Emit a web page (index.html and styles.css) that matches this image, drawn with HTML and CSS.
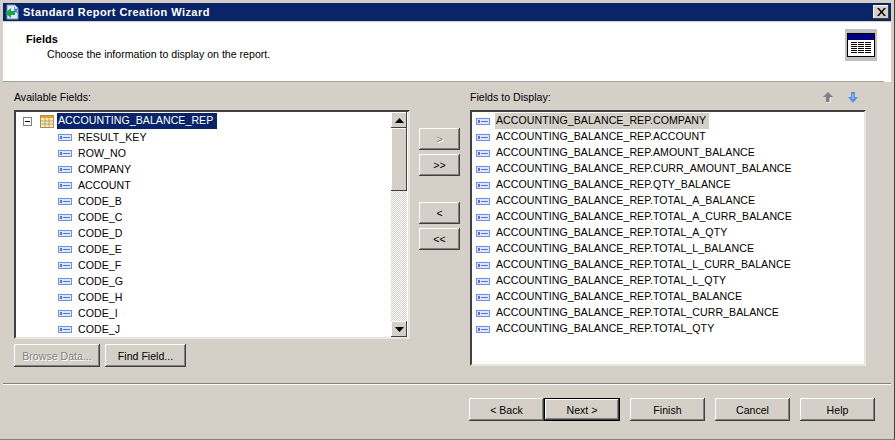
FILE: index.html
```html
<!DOCTYPE html>
<html lang="en">
<head>
<meta charset="utf-8">
<title>Standard Report Creation Wizard</title>
<link rel="stylesheet" href="styles.css">
</head>
<body>
<svg class="defs" width="0" height="0" aria-hidden="true">
  <symbol id="field" viewBox="0 0 14 7">
    <rect x="0.5" y="0.5" width="13" height="6" fill="#dfe8fa" stroke="#6f8fe0"/>
    <rect x="2" y="2" width="2" height="3" fill="#4f74d8"/>
    <rect x="5" y="3" width="7" height="1" fill="#4f74d8"/>
  </symbol>
</svg>
<main class="window">
  <header class="titlebar">
    <svg class="app-icon" width="16" height="16" viewBox="0 0 16 16">
      <path d="M3 1h8l3 3v11H3z" fill="#dfe8f4" stroke="#7f93b5"/>
      <path d="M1 9l6-5v3h4v4H7v3z" fill="#1fa34a"/>
      <path d="M10 2l1.500 3 3-1-2 3 2 2-4-1z" fill="#3f7fd0"/>
    </svg>
    <span class="title">Standard Report Creation Wizard</span>
    <button class="close" aria-label="Close">
      <svg width="9" height="8" viewBox="0 0 9 8"><path d="M0 0h2l2.500 3L7 0h2L5.500 4 9 8H7L4.500 5 2 8H0l3.500-4z" fill="#000"/></svg>
    </button>
  </header>
  <section class="banner">
    <div class="banner-text">
      <h1>Fields</h1>
      <p>Choose the information to display on the report.</p>
    </div>
    <div class="banner-icon">
      <svg width="28" height="24" viewBox="0 0 28 24">
        <rect x="0.500" y="0.500" width="27" height="23" fill="#fff" stroke="#000"/>
        <rect x="1" y="1" width="26" height="6" fill="#000080"/>
        <path d="M4 9h6v1H4zM4 11h6v1H4zM4 13h6v1H4zM4 15h6v1H4zM4 17h6v1H4zM4 19h6v1H4zM11 9h6v1h-6zM11 11h6v1h-6zM11 13h6v1h-6zM11 15h6v1h-6zM11 17h6v1h-6zM11 19h6v1h-6zM18 9h6v1h-6zM18 11h6v1h-6zM18 13h6v1h-6zM18 15h6v1h-6zM18 17h6v1h-6zM18 19h6v1h-6z" fill="#000"/>
      </svg>
    </div>
  </section>
  <section class="content">
    <div class="col-left">
      <label class="col-label">Available Fields:</label>
      <div class="listbox tree">
        <div class="tree-scroll">
          <div class="root-row">
            <span class="expander"></span>
            <svg class="table-icon" width="14" height="13" viewBox="0 0 14 13">
              <rect x="0.500" y="0.500" width="13" height="12" fill="#fbeec4" stroke="#a9915c"/>
              <rect x="1" y="1" width="12" height="2" fill="#f0a020"/>
              <path d="M5 3v9M9 3v9M1 6h12M1 9h12" stroke="#c0a05c" fill="none"/>
            </svg>
            <span class="selected">ACCOUNTING_BALANCE_REP</span>
          </div>
          <div class="child"><svg class="fi"><use href="#field"/></svg>RESULT_KEY</div>
          <div class="child"><svg class="fi"><use href="#field"/></svg>ROW_NO</div>
          <div class="child"><svg class="fi"><use href="#field"/></svg>COMPANY</div>
          <div class="child"><svg class="fi"><use href="#field"/></svg>ACCOUNT</div>
          <div class="child"><svg class="fi"><use href="#field"/></svg>CODE_B</div>
          <div class="child"><svg class="fi"><use href="#field"/></svg>CODE_C</div>
          <div class="child"><svg class="fi"><use href="#field"/></svg>CODE_D</div>
          <div class="child"><svg class="fi"><use href="#field"/></svg>CODE_E</div>
          <div class="child"><svg class="fi"><use href="#field"/></svg>CODE_F</div>
          <div class="child"><svg class="fi"><use href="#field"/></svg>CODE_G</div>
          <div class="child"><svg class="fi"><use href="#field"/></svg>CODE_H</div>
          <div class="child"><svg class="fi"><use href="#field"/></svg>CODE_I</div>
          <div class="child"><svg class="fi"><use href="#field"/></svg>CODE_J</div>
        </div>
        <div class="scrollbar">
          <div class="sb-btn"><svg width="9" height="5" viewBox="0 0 9 5"><path d="M4.500 0L9 5H0z" fill="#000"/></svg></div>
          <div class="sb-thumb"></div>
          <div class="sb-track"></div>
          <div class="sb-btn"><svg width="9" height="5" viewBox="0 0 9 5"><path d="M0 0h9L4.500 5z" fill="#000"/></svg></div>
        </div>
      </div>
      <div class="left-actions">
        <button class="btn browse" disabled>Browse Data...</button>
        <button class="btn find">Find Field...</button>
      </div>
    </div>
    <div class="movers">
      <div class="mover-group">
        <button class="btn mover" disabled>&gt;</button>
        <button class="btn mover">&gt;&gt;</button>
      </div>
      <div class="mover-group">
        <button class="btn mover">&lt;</button>
        <button class="btn mover">&lt;&lt;</button>
      </div>
    </div>
    <div class="col-right">
      <div class="right-head">
        <label class="col-label">Fields to Display:</label>
        <div class="order">
          <svg width="12" height="11" viewBox="0 0 12 11"><path d="M6 0l5 5H8v5H4V5H1z" fill="#808080"/><path d="M8 6v5H4" stroke="#fff" fill="none"/></svg>
          <svg width="12" height="11" viewBox="0 0 12 11"><path d="M4 0h4v5h3l-5 6-5-6h3z" fill="#5b8fe0"/><path d="M6 2v5" stroke="#b9d2f5"/></svg>
        </div>
      </div>
      <div class="listbox display">
        <div class="row"><svg class="fi"><use href="#field"/></svg><span class="focused">ACCOUNTING_BALANCE_REP.COMPANY</span></div>
        <div class="row"><svg class="fi"><use href="#field"/></svg><span>ACCOUNTING_BALANCE_REP.ACCOUNT</span></div>
        <div class="row"><svg class="fi"><use href="#field"/></svg><span>ACCOUNTING_BALANCE_REP.AMOUNT_BALANCE</span></div>
        <div class="row"><svg class="fi"><use href="#field"/></svg><span>ACCOUNTING_BALANCE_REP.CURR_AMOUNT_BALANCE</span></div>
        <div class="row"><svg class="fi"><use href="#field"/></svg><span>ACCOUNTING_BALANCE_REP.QTY_BALANCE</span></div>
        <div class="row"><svg class="fi"><use href="#field"/></svg><span>ACCOUNTING_BALANCE_REP.TOTAL_A_BALANCE</span></div>
        <div class="row"><svg class="fi"><use href="#field"/></svg><span>ACCOUNTING_BALANCE_REP.TOTAL_A_CURR_BALANCE</span></div>
        <div class="row"><svg class="fi"><use href="#field"/></svg><span>ACCOUNTING_BALANCE_REP.TOTAL_A_QTY</span></div>
        <div class="row"><svg class="fi"><use href="#field"/></svg><span>ACCOUNTING_BALANCE_REP.TOTAL_L_BALANCE</span></div>
        <div class="row"><svg class="fi"><use href="#field"/></svg><span>ACCOUNTING_BALANCE_REP.TOTAL_L_CURR_BALANCE</span></div>
        <div class="row"><svg class="fi"><use href="#field"/></svg><span>ACCOUNTING_BALANCE_REP.TOTAL_L_QTY</span></div>
        <div class="row"><svg class="fi"><use href="#field"/></svg><span>ACCOUNTING_BALANCE_REP.TOTAL_BALANCE</span></div>
        <div class="row"><svg class="fi"><use href="#field"/></svg><span>ACCOUNTING_BALANCE_REP.TOTAL_CURR_BALANCE</span></div>
        <div class="row"><svg class="fi"><use href="#field"/></svg><span>ACCOUNTING_BALANCE_REP.TOTAL_QTY</span></div>
      </div>
    </div>
  </section>
  <footer class="footer">
    <div class="nav-pair">
      <button class="btn nav">&lt; Back</button>
      <button class="btn nav default">Next &gt;</button>
    </div>
    <button class="btn nav">Finish</button>
    <button class="btn nav">Cancel</button>
    <button class="btn nav">Help</button>
  </footer>
</main>
</body>
</html>
```
FILE: styles.css
```css
* { box-sizing: border-box; }
html, body { margin: 0; padding: 0; }
body {
  width: 895px;
  height: 440px;
  overflow: hidden;
  background: #d4d0c8;
  font-family: "Liberation Sans", Arial, sans-serif;
  font-size: 10.6px;
  color: #000;
}
.defs { position: absolute; }
.window {
  width: 895px;
  height: 440px;
  padding: 3px;
  border-right: 1px solid #404040;
  border-bottom: 1px solid #808080;
  display: flex;
  flex-direction: column;
}
.titlebar {
  height: 18px;
  flex: none;
  background: #0a246a;
  display: flex;
  align-items: center;
  padding: 0 2px 0 1px;
}
.app-icon { flex: none; }
.title {
  margin-left: 3px;
  color: #fff;
  font-weight: 700;
  font-size: 11px;
  letter-spacing: 0.45px;
  flex: 1;
}
.close {
  width: 16px;
  height: 14px;
  padding: 0;
  border: 0;
  background: #d4d0c8;
  box-shadow: inset -1px -1px 0 #404040, inset 1px 1px 0 #fff;
  display: flex;
  align-items: center;
  justify-content: center;
}
.banner {
  height: 60px;
  flex: none;
  margin-top: 1px;
  background: #fff;
  display: flex;
  justify-content: space-between;
  position: relative;
}
.banner::after {
  content: "";
  position: absolute;
  left: 0;
  right: 7px;
  bottom: 0;
  height: 1px;
  background: #a0a0a0;
}
.banner-text { padding: 10px 0 0 23px; }
.banner-text h1 { margin: 0; font-size: 11px; font-weight: 700; line-height: 14px; }
.banner-text p { margin: 1px 0 0 21px; line-height: 15px; }
.banner-icon {
  width: 32px;
  height: 32px;
  margin: 7px 14px 0 0;
  background: #c0c0c0;
  display: flex;
  align-items: center;
  justify-content: center;
}
.content {
  flex: none;
  height: 303px;
  padding: 9px 0 0 11px;
  border-bottom: 1px solid #fff;
  box-shadow: inset 0 -1px 0 #808080;
  display: flex;
}
.col-left { width: 396px; flex: none; }
.col-label { display: block; height: 19px; line-height: 12px; }
.listbox {
  background: #fff;
  border-top: 2px solid #404040;
  border-left: 2px solid #404040;
  border-right: 2px solid #e8e6e0;
  border-bottom: 2px solid #e8e6e0;
  letter-spacing: 0.05px;
}
.tree { height: 229px; display: flex; }
.tree-scroll { flex: 1; overflow: hidden; padding-top: 1px; }
.root-row {
  height: 16px;
  display: flex;
  align-items: center;
  padding-left: 7px;
}
.expander {
  width: 9px;
  height: 9px;
  border: 1px solid #808080;
  position: relative;
  flex: none;
}
.expander::after {
  content: "";
  position: absolute;
  left: 1px;
  top: 3px;
  width: 5px;
  height: 1px;
  background: #000;
}
.table-icon { margin-left: 8px; flex: none; }
.selected {
  margin-left: 3px;
  padding: 0 4px 0 1px;
  height: 16px;
  line-height: 15px;
  background: #0a246a;
  color: #fff;
}
.child {
  height: 16px;
  display: flex;
  align-items: center;
  padding-left: 42px;
  white-space: nowrap;
}
.fi { width: 14px; height: 7px; flex: none; margin-right: 6px; }
.scrollbar {
  width: 16px;
  flex: none;
  margin-right: 1px;
  display: flex;
  flex-direction: column;
  background: #fff;
}
.sb-btn {
  height: 16px;
  flex: none;
  background: #d4d0c8;
  box-shadow: inset -1px -1px 0 #404040, inset 1px 1px 0 #fff;
  display: flex;
  align-items: center;
  justify-content: center;
}
.sb-thumb {
  height: 63px;
  flex: none;
  background: #d4d0c8;
  box-shadow: inset -1px -1px 0 #404040, inset 1px 1px 0 #fff;
}
.sb-track {
  flex: 1;
  background: repeating-conic-gradient(#d4d0c8 0 25%, #fff 0 50%) 0 0 / 2px 2px;
}
.left-actions { display: flex; gap: 5px; margin-top: 5px; }
.btn {
  font: inherit;
  color: #000;
  padding: 0;
  border: 0;
  background: #d4d0c8;
  box-shadow: inset -1px -1px 0 #404040, inset 1px 1px 0 #fff, inset -2px -2px 0 #808080;
}
.btn[disabled] { color: #808080; text-shadow: 1px 1px 0 #fff; }
.browse { width: 86px; height: 23px; }
.find { width: 81px; height: 23px; }
.movers {
  width: 60px;
  flex: none;
  padding: 37px 0 0 9px;
  display: flex;
  flex-direction: column;
  gap: 26px;
}
.mover-group { display: flex; flex-direction: column; gap: 4px; }
.mover { width: 41px; height: 22px; }
.col-right { width: 396px; flex: none; }
.right-head { display: flex; justify-content: space-between; height: 19px; }
.order {
  display: flex;
  gap: 13px;
  padding: 1px 7px 0 0;
  height: 13px;
}
.display { height: 256px; padding-top: 1px; }
.row {
  height: 16px;
  display: flex;
  align-items: center;
  padding-left: 4px;
  white-space: nowrap;
}
.row .fi { margin-right: 5px; }
.row span { padding: 0 3px 0 1px; height: 16px; line-height: 15px; }
.focused { background: #d4d0c8; }
.footer {
  flex: 1;
  padding: 13px 0 0 466px;
  display: flex;
  gap: 10px;
}
.nav-pair { display: flex; }
.nav { width: 75px; height: 23px; }
.default {
  width: 76px;
  outline: 1px solid #000;
  outline-offset: -1px;
  box-shadow: inset -2px -2px 0 #404040, inset 2px 2px 0 #fff, inset -3px -3px 0 #808080;
}
```
